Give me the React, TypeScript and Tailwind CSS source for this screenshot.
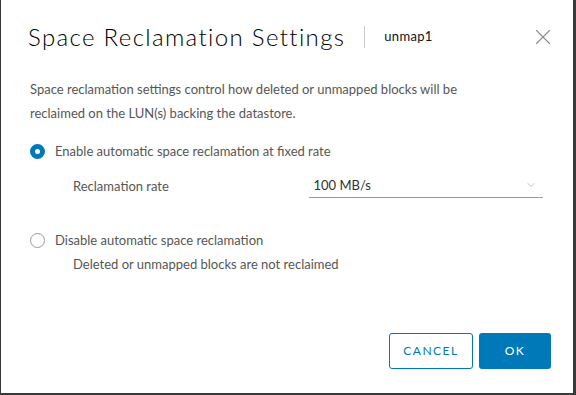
import { ChevronDown, X } from "lucide-react";

function Radio({ checked }: { checked: boolean }) {
  return checked ? (
    <span className="box-border flex h-[15px] w-[15px] shrink-0 items-center justify-center rounded-full border-[5px] border-[#0079b8] bg-white" />
  ) : (
    <span className="box-border h-[15px] w-[15px] shrink-0 rounded-full border border-[#9a9a9a] bg-white" />
  );
}

export default function App() {
  return (
    <div className="h-[395px] w-[576px] bg-[#3a3a3a] pl-px pr-[3px] pb-[2px] font-['Lato',sans-serif]">
      <div className="flex h-full flex-col bg-white">
        <div className="flex items-center pl-[27px] pr-[17px] pt-[21px]">
          <h1 className="text-[24px] font-light leading-[32px] tracking-[1.35px] text-[#000]">
            Space Reclamation Settings
          </h1>
          <span className="ml-[19px] h-[22px] w-px bg-[#cccccc]" />
          <span className="ml-[19px] text-[13px] tracking-[0.3px] text-[#111]">unmap1</span>
          <X className="ml-auto h-[26px] w-[26px] text-[#8c8c8c]" strokeWidth={1} />
        </div>

        <div className="pl-[29px] pr-[30px] pt-[24px] text-[13px] leading-[24px] text-[#565656]">
          <p>
            Space reclamation settings control how deleted or unmapped blocks will be
            <br />
            reclaimed on the LUN(s) backing the datastore.
          </p>

          <label className="mt-[14px] flex items-center gap-[10px]">
            <Radio checked />
            <span>Enable automatic space reclamation at fixed rate</span>
          </label>

          <div className="mt-[10px] flex items-center">
            <span className="w-[281px] pl-[43px]">Reclamation rate</span>
            <div className="flex h-[25px] w-[235px] items-center justify-between border-b border-[#9a9a9a] pl-[4px] pr-[6px]">
              <span className="text-[#313131]">100 MB/s</span>
              <ChevronDown className="h-[12px] w-[12px] text-[#aaaaaa]" strokeWidth={1.5} />
            </div>
          </div>

          <label className="mt-[30px] flex items-center gap-[10px]">
            <Radio checked={false} />
            <span>Disable automatic space reclamation</span>
          </label>
          <p className="pl-[43px]">Deleted or unmapped blocks are not reclaimed</p>
        </div>

        <div className="mt-auto flex justify-end gap-[6px] pb-[24px] pr-[22px]">
          <button className="h-[36px] w-[84px] rounded-[3px] border border-[#0079b8] bg-white text-[12px] tracking-[1.5px] text-[#0079b8]">
            CANCEL
          </button>
          <button className="h-[36px] w-[72px] rounded-[3px] bg-[#0079b8] text-[12px] tracking-[1.5px] text-white">
            OK
          </button>
        </div>
      </div>
    </div>
  );
}
